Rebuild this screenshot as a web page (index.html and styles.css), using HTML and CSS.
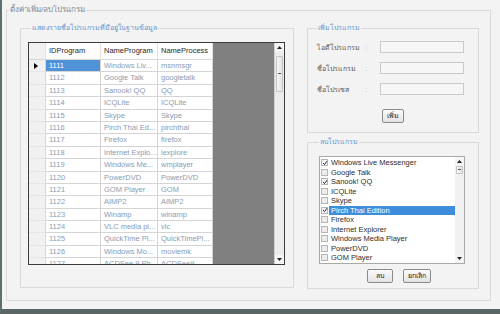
FILE: index.html
```html
<!DOCTYPE html>
<html lang="th">
<head>
<meta charset="utf-8">
<title>ตั้งค่าเพิ่ม/ลบโปรแกรม</title>
<link rel="stylesheet" href="styles.css">
</head>
<body>
<div class="window">
  <fieldset class="outer">
    <legend class="outer-legend">ตั้งค่าเพิ่ม/ลบโปรแกรม</legend>
    <div class="layout">
      <fieldset class="group list-group">
        <legend class="group-legend">แสดงรายชื่อโปรแกรมที่มีอยู่ในฐานข้อมูล</legend>
        <div class="grid">
          <div class="grid-body">
            <div class="grid-table">
              <div class="hc corner"></div><div class="hc">IDProgram</div><div class="hc">NameProgram</div><div class="hc">NameProcess</div>

              <div class="rh current"><svg width="4" height="6" viewBox="0 0 4 6"><path d="M0 0 L4 3 L0 6 Z" fill="#000"/></svg></div><div class="c sel">1111</div><div class="c">Windows Liv...</div><div class="c">msnmsgr</div>
              <div class="rh"></div><div class="c">1112</div><div class="c">Google Talk</div><div class="c">googletalk</div>
              <div class="rh"></div><div class="c">1113</div><div class="c">Sanook! QQ</div><div class="c">QQ</div>
              <div class="rh"></div><div class="c">1114</div><div class="c">ICQLite</div><div class="c">ICQLite</div>
              <div class="rh"></div><div class="c">1115</div><div class="c">Skype</div><div class="c">Skype</div>
              <div class="rh"></div><div class="c">1116</div><div class="c">Pirch Thai Ed...</div><div class="c">pirchthai</div>
              <div class="rh"></div><div class="c">1117</div><div class="c">Firefox</div><div class="c">firefox</div>
              <div class="rh"></div><div class="c">1118</div><div class="c">Internet Explo...</div><div class="c">iexplore</div>
              <div class="rh"></div><div class="c">1119</div><div class="c">Windows Me...</div><div class="c">wmplayer</div>
              <div class="rh"></div><div class="c">1120</div><div class="c">PowerDVD</div><div class="c">PowerDVD</div>
              <div class="rh"></div><div class="c">1121</div><div class="c">GOM Player</div><div class="c">GOM</div>
              <div class="rh"></div><div class="c">1122</div><div class="c">AIMP2</div><div class="c">AIMP2</div>
              <div class="rh"></div><div class="c">1123</div><div class="c">Winamp</div><div class="c">winamp</div>
              <div class="rh"></div><div class="c">1124</div><div class="c">VLC media pl...</div><div class="c">vlc</div>
              <div class="rh"></div><div class="c">1125</div><div class="c">QuickTime Pl...</div><div class="c">QuickTimePl...</div>
              <div class="rh"></div><div class="c">1126</div><div class="c">Windows Mo...</div><div class="c">moviemk</div>
              <div class="rh"></div><div class="c">1127</div><div class="c">ACDSee 9 Ph...</div><div class="c">ACDSee9</div>
            </div>
          </div>
          <div class="vscroll">
            <div class="sbtn"><svg width="5" height="3" viewBox="0 0 5 3"><path d="M0 3 L2.5 0 L5 3 Z" fill="#222"/></svg></div>
            <div class="thumb big"><span class="grip"></span></div>
            <div class="track"></div>
            <div class="sbtn"><svg width="5" height="3" viewBox="0 0 5 3"><path d="M0 0 L2.5 3 L5 0 Z" fill="#222"/></svg></div>
          </div>
        </div>
      </fieldset>

      <div class="side">
        <fieldset class="group add-group">
          <legend class="group-legend side-legend">เพิ่มโปรแกรม</legend>
          <div class="form">
            <span class="lbl">ไอดีโปรแกรม</span><span class="colon">:</span><span class="inp"></span>
            <span class="lbl">ชื่อโปรแกรม</span><span class="colon">:</span><span class="inp"></span>
            <span class="lbl">ชื่อโปรเซส</span><span class="colon">:</span><span class="inp"></span>
          </div>
          <div class="btns add-btns">
            <button class="btn btn-add">เพิ่ม</button>
          </div>
        </fieldset>

        <fieldset class="group del-group">
          <legend class="group-legend side-legend del-legend">ลบโปรแกรม</legend>
          <div class="listbox">
            <ul class="items">
              <li><span class="cb on"><svg width="6" height="6" viewBox="0 0 6 6"><path d="M1 3 L2.5 4.6 L5 1.2" fill="none" stroke="#333" stroke-width="1"/></svg></span><span class="txt">Windows Live Messenger</span></li>
              <li><span class="cb"></span><span class="txt">Google Talk</span></li>
              <li><span class="cb on"><svg width="6" height="6" viewBox="0 0 6 6"><path d="M1 3 L2.5 4.6 L5 1.2" fill="none" stroke="#333" stroke-width="1"/></svg></span><span class="txt">Sanook! QQ</span></li>
              <li><span class="cb"></span><span class="txt">ICQLite</span></li>
              <li><span class="cb"></span><span class="txt">Skype</span></li>
              <li><span class="cb on"><svg width="6" height="6" viewBox="0 0 6 6"><path d="M1 3 L2.5 4.6 L5 1.2" fill="none" stroke="#333" stroke-width="1"/></svg></span><span class="txt selected">Pirch Thai Edition</span></li>
              <li><span class="cb"></span><span class="txt">Firefox</span></li>
              <li><span class="cb"></span><span class="txt">Internet Explorer</span></li>
              <li><span class="cb"></span><span class="txt">Windows Media Player</span></li>
              <li><span class="cb"></span><span class="txt">PowerDVD</span></li>
              <li><span class="cb"></span><span class="txt">GOM Player</span></li>
            </ul>
            <div class="vscroll small">
              <div class="sbtn"><svg width="5" height="3" viewBox="0 0 5 3"><path d="M0 3 L2.5 0 L5 3 Z" fill="#222"/></svg></div>
              <div class="thumb mini"><span class="grip"></span></div>
              <div class="track"></div>
              <div class="sbtn"><svg width="5" height="3" viewBox="0 0 5 3"><path d="M0 0 L2.5 3 L5 0 Z" fill="#222"/></svg></div>
            </div>
          </div>
          <div class="btns del-btns">
            <button class="btn btn-del">ลบ</button>
            <button class="btn btn-cancel">ยกเลิก</button>
          </div>
        </fieldset>
      </div>
    </div>
  </fieldset>
</div>
</body>
</html>
```

FILE: styles.css
```css
html, body {
  margin: 0;
  padding: 0;
}
body {
  width: 500px;
  height: 314px;
  overflow: hidden;
  background: #f3f3f3;
  font-family: "Liberation Sans", Tahoma, sans-serif;
  color: #333;
}
.window {
  box-sizing: border-box;
  width: 500px;
  height: 314px;
  border-left: 2px solid #5f6e6e;
  border-bottom: 5px solid #5b6767;
  padding-left: 4px;
  padding-top: 5px;
  background: #f3f3f3;
}
fieldset {
  margin: 0;
  padding: 0;
  min-width: 0;
  border: 1px solid #d9d9d9;
}
legend {
  font-size: 8px;
  line-height: 10px;
  height: 10px;
}
.outer {
  box-sizing: border-box;
  width: 485px;
  height: 296px;
}
.outer-legend {
  margin-left: 2px;
  padding: 0 1px;
  color: #7b8996;
}
.layout {
  display: flex;
  gap: 13px;
  padding: 8px 0 0 13px;
}
.group-legend {
  margin-left: 3px;
  padding: 0 1px;
  color: #5e95cf;
  font-size: 7px;
}

/* ---------- left grid group ---------- */
.list-group {
  box-sizing: border-box;
  width: 274px;
  height: 265px;
  padding: 9px 0 0 7px;
}
.grid {
  display: flex;
  width: 257px;
  height: 223px;
  box-sizing: border-box;
  border: 1px solid #3c3c3c;
  background: #808080;
}
.grid-body {
  flex: 1;
  overflow: hidden;
}
.grid-table {
  display: grid;
  grid-template-columns: 17px 55px 57px 55px;
  grid-auto-rows: 12.4px;
  grid-template-rows: 17px;
  width: 184px;
  background: #fff;
}
.hc {
  box-sizing: border-box;
  height: 17px;
  background: #fdfdfd;
  border-right: 1px solid #e2e2e2;
  border-bottom: 1px solid #d8d8d8;
  font-size: 7.5px;
  line-height: 16px;
  padding-left: 3px;
  color: #2a2a2a;
  white-space: nowrap;
  overflow: hidden;
}
.hc.corner {
  background: #f1f1f1;
}
.rh {
  box-sizing: border-box;
  background: #f1f1f1;
  border-right: 1px solid #d8d8d8;
  border-bottom: 1px solid #e6e6e6;
  display: flex;
  align-items: center;
  padding-left: 5px;
}
.c {
  box-sizing: border-box;
  border-right: 1px solid #d4d4d4;
  border-bottom: 1px solid #d4d4d4;
  font-size: 7.5px;
  line-height: 11.4px;
  padding-left: 3px;
  color: #8c9bb0;
  white-space: nowrap;
  overflow: hidden;
  background: #fff;
}
.c.sel {
  background: #4f92d6;
  color: #fff;
}

/* ---------- scrollbars ---------- */
.vscroll {
  width: 9px;
  display: flex;
  flex-direction: column;
  background: #ececec;
  border-left: 1px solid #d0d0d0;
}
.sbtn {
  height: 9px;
  flex: none;
  display: flex;
  align-items: center;
  justify-content: center;
  background: #f4f4f4;
}
.thumb {
  flex: none;
  box-sizing: border-box;
  border: 1px solid #c4c4c4;
  border-radius: 1px;
  background: linear-gradient(to right, #f6f6f6, #e4e4e4);
  display: flex;
  align-items: center;
  justify-content: center;
  margin: 0 1px;
}
.thumb.big {
  height: 36px;
  margin-top: 4px;
}
.thumb.mini {
  height: 8px;
}
.grip {
  width: 3px;
  height: 2px;
  border-top: 1px solid #555;
}
.track {
  flex: 1;
}

/* ---------- right side ---------- */
.side {
  display: flex;
  flex-direction: column;
  gap: 4px;
  width: 172px;
}
.side-legend {
  margin-left: 0;
  padding: 0 1px;
}
.add-group {
  box-sizing: border-box;
  height: 110px;
  padding: 8px 0 0 9px;
}
.form {
  display: grid;
  grid-template-columns: 47px 16px 84px;
  grid-auto-rows: 12px;
  row-gap: 9px;
  align-items: center;
}
.lbl {
  font-size: 7px;
  color: #555;
  white-space: nowrap;
}
.colon {
  font-size: 8px;
  color: #c2c2c2;
  padding-left: 1px;
}
.inp {
  box-sizing: border-box;
  height: 12px;
  border: 1px solid #c9c9c9;
  background: #f6f6f6;
}
.btns {
  display: flex;
  justify-content: center;
  gap: 10px;
}
.add-btns {
  margin-top: 14px;
  padding-right: 9px;
}
.btn {
  box-sizing: border-box;
  height: 14px;
  padding: 0;
  margin: 0;
  border: 1px solid #8a8a8a;
  border-radius: 2px;
  background: linear-gradient(#fafafa, #e3e3e3);
  font-family: "Liberation Sans", Tahoma, sans-serif;
  font-size: 7px;
  line-height: 12px;
  color: #222;
}
.btn-add { width: 22px; }
.btn-del { width: 26px; }
.btn-cancel { width: 28px; }

.del-group {
  box-sizing: border-box;
  height: 152px;
  padding: 9px 0 0 11px;
}
.listbox {
  box-sizing: border-box;
  display: flex;
  width: 146px;
  height: 108px;
  border: 1px solid #a9a9a9;
  background: #fff;
}
.items {
  flex: 1;
  list-style: none;
  margin: 0;
  padding: 1px 0 0 1px;
}
.items li {
  display: flex;
  align-items: center;
  height: 9.5px;
}
.cb {
  box-sizing: border-box;
  width: 7px;
  height: 7px;
  border: 1px solid #b5b5b5;
  background: #ececec;
  display: flex;
  align-items: center;
  justify-content: center;
  margin-right: 1px;
}
.cb.on {
  background: #f4f4f4;
}
.cb svg {
  flex: none;
}
.txt {
  flex: 1;
  height: 9.5px;
  font-size: 7.5px;
  line-height: 9.5px;
  padding-left: 2px;
  color: #2d2d2d;
  white-space: nowrap;
}
.txt.selected {
  background: #3d8ddb;
  color: #fff;
}
.vscroll.small {
  border-left: none;
  background: #f0f0f0;
}
.del-btns {
  margin-top: 5px;
}
```
